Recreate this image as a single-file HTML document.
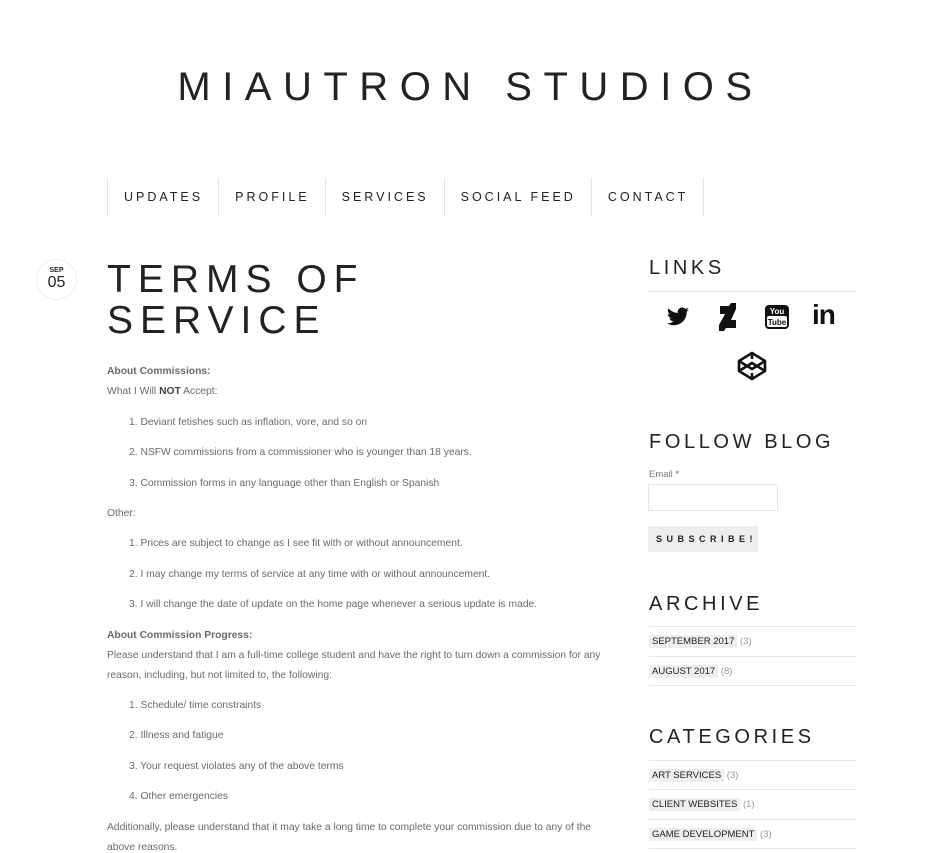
<!DOCTYPE html>
<html><head><meta charset="utf-8"><style>
*{margin:0;padding:0;box-sizing:border-box}
body{width:931px;height:851px;overflow:hidden;background:#fff;font-family:"Liberation Sans",sans-serif;color:#6a6a6a;position:relative}
.a{position:absolute;white-space:nowrap}
.title{left:0;width:931px;text-align:center;top:65px;font-size:40px;letter-spacing:11.5px;color:#222;font-weight:300;padding-left:10px}
.nav{top:178px;left:107px;height:38px;display:flex;border-left:1px solid #e5e5e5}
.nav div{border-right:1px solid #e5e5e5;padding:0 15px 0 16px;line-height:38px;font-size:12.5px;letter-spacing:3px;color:#222}
.date{left:36px;top:259px;width:41px;height:41px;border:1px solid #eee;border-radius:50%;text-align:center;color:#222}
h1{font-weight:300;font-size:39px;letter-spacing:7px;line-height:41px;color:#222;left:107px;top:259px}
.t{font-size:10.3px;left:107px}
.li{font-size:10.3px;left:129px}
h2{font-weight:300;font-size:20px;letter-spacing:3.6px;color:#222;left:649px}
.hr{left:649px;width:207px;border-top:1px solid #e8e8e8}
.tag{font-size:9.5px;left:649px;color:#999}
.tag span{background:#eee;color:#222;padding:1px 3px}
</style></head><body>
<div class="a title">MIAUTRON STUDIOS</div>
<div class="a nav"><div>UPDATES</div><div>PROFILE</div><div>SERVICES</div><div>SOCIAL FEED</div><div>CONTACT</div></div>
<div class="a date"><div style="font-size:7px;font-weight:bold;margin-top:7px;line-height:8px">SEP</div><div style="font-size:16px;line-height:15px">05</div></div>
<h1 class="a">TERMS OF<br>SERVICE</h1>
<div class="a t" style="top:366px;font-weight:bold">About Commissions:</div>
<div class="a t" style="top:386px">What I Will <b style="color:#444">NOT</b> Accept:</div>
<div class="a li" style="top:417px">1. Deviant fetishes such as inflation, vore, and so on</div>
<div class="a li" style="top:447px">2. NSFW commissions from a commissioner who is younger than 18 years.</div>
<div class="a li" style="top:478px">3. Commission forms in any language other than English or Spanish</div>
<div class="a t" style="top:508px">Other:</div>
<div class="a li" style="top:538px">1. Prices are subject to change as I see fit with or without announcement.</div>
<div class="a li" style="top:569px">2. I may change my terms of service at any time with or without announcement.</div>
<div class="a li" style="top:599px">3. I will change the date of update on the home page whenever a serious update is made.</div>
<div class="a t" style="top:630px;font-weight:bold">About Commission Progress:</div>
<div class="a t" style="top:650px">Please understand that I am a full-time college student and have the right to turn down a commission for any</div>
<div class="a t" style="top:670px">reason, including, but not limited to, the following:</div>
<div class="a li" style="top:700px">1. Schedule/ time constraints</div>
<div class="a li" style="top:730px">2. Illness and fatigue</div>
<div class="a li" style="top:761px">3. Your request violates any of the above terms</div>
<div class="a li" style="top:791px">4. Other emergencies</div>
<div class="a t" style="top:822px">Additionally, please understand that it may take a long time to complete your commission due to any of the</div>
<div class="a t" style="top:842px">above reasons.</div>

<h2 class="a" style="top:257px">LINKS</h2>
<div class="a hr" style="top:291px"></div>
<svg class="a" style="left:665px;top:305px" width="26" height="24" viewBox="0 0 24 24"><path d="M23 4.6c-.8.4-1.7.6-2.6.7.9-.6 1.6-1.4 2-2.5-.9.5-1.9.9-2.9 1.1a4.5 4.5 0 0 0-7.7 4.1C7.9 7.8 4.6 6 2.4 3.3a4.5 4.5 0 0 0 1.4 6c-.7 0-1.4-.2-2-.6 0 2.2 1.6 4 3.6 4.4-.7.2-1.4.2-2 .1.6 1.8 2.2 3.1 4.2 3.1A9 9 0 0 1 1 18.2 12.8 12.8 0 0 0 7.9 20.2c8.3 0 12.8-6.9 12.8-12.8v-.6c.9-.6 1.6-1.4 2.3-2.2z" fill="#111"/></svg>
<svg class="a" style="left:718px;top:303px" width="20" height="28" viewBox="0 0 20 28"><path d="M18 0h-5l-2 3H2v8h5L1 22v6h5l2-3h10v-8h-5l5-11z" fill="#111"/></svg>
<svg class="a" style="left:764px;top:304px" width="26" height="26" viewBox="0 0 26 26"><rect x="1" y="1" width="24" height="24" rx="4" fill="#111"/><rect x="3" y="12" width="20" height="11" rx="2" fill="#fff"/><text x="13" y="10" font-size="8" fill="#fff" text-anchor="middle" font-family="Liberation Sans" font-weight="bold">You</text><text x="13" y="21" font-size="8" fill="#111" text-anchor="middle" font-family="Liberation Sans" font-weight="bold">Tube</text></svg>
<div class="a" style="left:812px;top:299px;font-size:28px;font-weight:bold;color:#111;letter-spacing:-1px">in</div>
<svg class="a" style="left:737px;top:351px" width="30" height="30" viewBox="0 0 30 30" fill="none" stroke="#111" stroke-width="2.6" stroke-linejoin="round"><path d="M15 2L28 10v10L15 28 2 20V10z M2 10l13 8 13-8 M2 20l13-8 13 8 M15 2v6 M15 22v6"/></svg>

<h2 class="a" style="top:431px">FOLLOW BLOG</h2>
<div class="a tag" style="top:469px;color:#777">Email <span style="background:none;padding:0;color:#666">*</span></div>
<div class="a" style="left:648px;top:484px;width:130px;height:27px;border:1px solid #e8e8e8"></div>
<div class="a" style="left:648px;top:526px;width:110px;height:26px;background:#eee;font-size:9px;letter-spacing:4.5px;color:#222;line-height:26px;padding-left:8px;font-weight:bold">SUBSCRIBE!</div>

<h2 class="a" style="top:593px">ARCHIVE</h2>
<div class="a hr" style="top:626px"></div>
<div class="a tag" style="top:636px"><span>SEPTEMBER 2017</span> (3)</div>
<div class="a hr" style="top:656px"></div>
<div class="a tag" style="top:666px"><span>AUGUST 2017</span> (8)</div>
<div class="a hr" style="top:685px"></div>

<h2 class="a" style="top:726px">CATEGORIES</h2>
<div class="a hr" style="top:760px"></div>
<div class="a tag" style="top:770px"><span>ART SERVICES</span> (3)</div>
<div class="a hr" style="top:789px"></div>
<div class="a tag" style="top:799px"><span>CLIENT WEBSITES</span> (1)</div>
<div class="a hr" style="top:819px"></div>
<div class="a tag" style="top:829px"><span>GAME DEVELOPMENT</span> (3)</div>
<div class="a hr" style="top:848px"></div>
</body></html>
